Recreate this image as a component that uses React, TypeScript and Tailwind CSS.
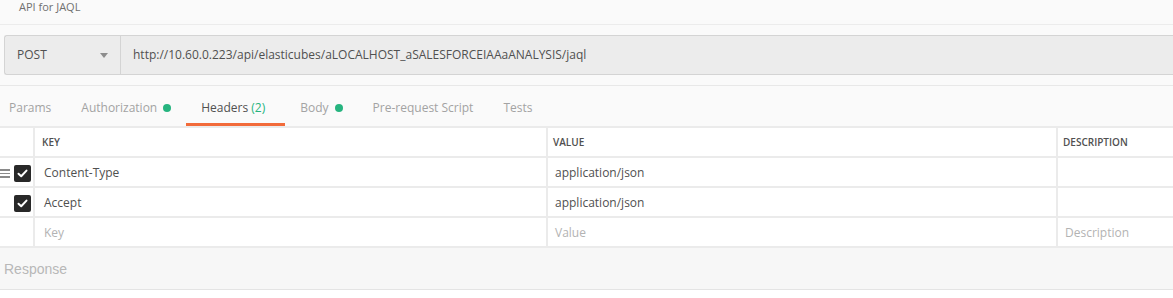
const tabs = [
  { label: 'Params' },
  { label: 'Authorization', dot: true },
  { label: 'Headers', count: 2, active: true },
  { label: 'Body', dot: true },
  { label: 'Pre-request Script' },
  { label: 'Tests' },
];

const headers = [
  { key: 'Content-Type', value: 'application/json', handle: true },
  { key: 'Accept', value: 'application/json' },
];

function Check() {
  return (
    <div className="w-[17px] h-[17px] rounded-[2px] bg-[#282828] flex items-center justify-center">
      <svg width="11" height="9" viewBox="0 0 11 9" fill="none">
        <path d="M1.5 4.8 L4.2 7.3 L9.5 1.6" stroke="white" strokeWidth="2" strokeLinecap="round" strokeLinejoin="round" />
      </svg>
    </div>
  );
}

function Handle() {
  return (
    <div className="flex flex-col gap-[2px] w-[10px]">
      <span className="h-[1.5px] bg-[#8a8a8a]" />
      <span className="h-[1.5px] bg-[#8a8a8a]" />
      <span className="h-[1.5px] bg-[#8a8a8a]" />
    </div>
  );
}

export default function App() {
  return (
    <div className="w-[1173px] h-[298px] overflow-hidden bg-[#fafafa] font-['Open_Sans',sans-serif] text-[#505050]">
      {/* Request name */}
      <div className="h-[25px] border-b border-[#ececec] pl-[19px] text-[11px] text-[#707070] leading-[14px]">
        API for JAQL
      </div>

      {/* URL bar */}
      <div className="h-[61px] border-b border-[#e8e8e8] pt-[10px] pl-[4px]">
        <div className="h-[40px] flex bg-[#ececec] border border-r-0 border-[#d4d4d4] rounded-l-[3px]">
          <div className="w-[116px] flex items-center justify-between pl-[12px] pr-[12px] border-r border-[#d4d4d4] text-[12px] text-[#505050]">
            <span>POST</span>
            <svg width="8" height="5" viewBox="0 0 8 5">
              <path d="M0 0 H8 L4 5 Z" fill="#8d8d8d" />
            </svg>
          </div>
          <div className="flex items-center pl-[12px] text-[12px] text-[#505050]">
            http://10.60.0.223/api/elasticubes/aLOCALHOST_aSALESFORCEIAAaANALYSIS/jaql
          </div>
        </div>
      </div>

      {/* Tabs */}
      <div className="h-[40px] flex -ml-[6px] text-[12px]">
        {tabs.map((t) => (
          <div
            key={t.label}
            className={`flex items-start gap-[6px] pl-[15px] border-b-[3px] pt-[13px] ${
              t.active ? 'pr-[20px] border-[#f26b3a] text-[#505050]' : 'pr-[15px] border-transparent text-[#a3a3a3]'
            }`}
          >
            <span className="leading-[17px]">
              {t.label}
              {t.count != null && <span className="text-[#26b47f]"> ({t.count})</span>}
            </span>
            {t.dot && <span className="mt-[5px] w-[8px] h-[8px] rounded-full bg-[#26b47f]" />}
          </div>
        ))}
      </div>

      {/* Headers table */}
      <div className="grid grid-cols-[33px_511px_508px_1fr] gap-[2px] bg-[#ebebeb] py-[2px] auto-rows-[28px] text-[12px]">
        <div className="bg-white" />
        <div className="bg-white flex items-center pl-[7px] text-[10px] font-semibold text-[#505050]">KEY</div>
        <div className="bg-white flex items-center pl-[5px] text-[10px] font-semibold text-[#505050]">VALUE</div>
        <div className="bg-white flex items-center pl-[5px] text-[10px] font-semibold text-[#505050]">DESCRIPTION</div>

        {headers.map((h) => (
          <div key={h.key} className="contents">
            <div className="bg-white flex items-center justify-end gap-[4px] pr-[2px] pt-[3px]">
              {h.handle && <Handle />}
              <Check />
            </div>
            <div className="bg-white flex items-center pl-[9px] pt-[2px]">{h.key}</div>
            <div className="bg-white flex items-center pl-[7px] pt-[2px]">{h.value}</div>
            <div className="bg-white" />
          </div>
        ))}

        <div className="bg-white" />
        <div className="bg-white flex items-center pl-[9px] pt-[2px] text-[#b3b3b3]">Key</div>
        <div className="bg-white flex items-center pl-[7px] pt-[2px] text-[#b3b3b3]">Value</div>
        <div className="bg-white flex items-center pl-[7px] pt-[2px] text-[#b3b3b3]">Description</div>
      </div>

      {/* Response */}
      <div className="h-[42px] bg-[#f7f7f7] border-b border-[#e4e4e4] flex items-center pl-[4px] pt-[1px] font-['Liberation_Sans',Arial,sans-serif] text-[14px] text-[#b8b8b8]">
        Response
      </div>
      <div className="bg-white h-[10px]" />
    </div>
  );
}
